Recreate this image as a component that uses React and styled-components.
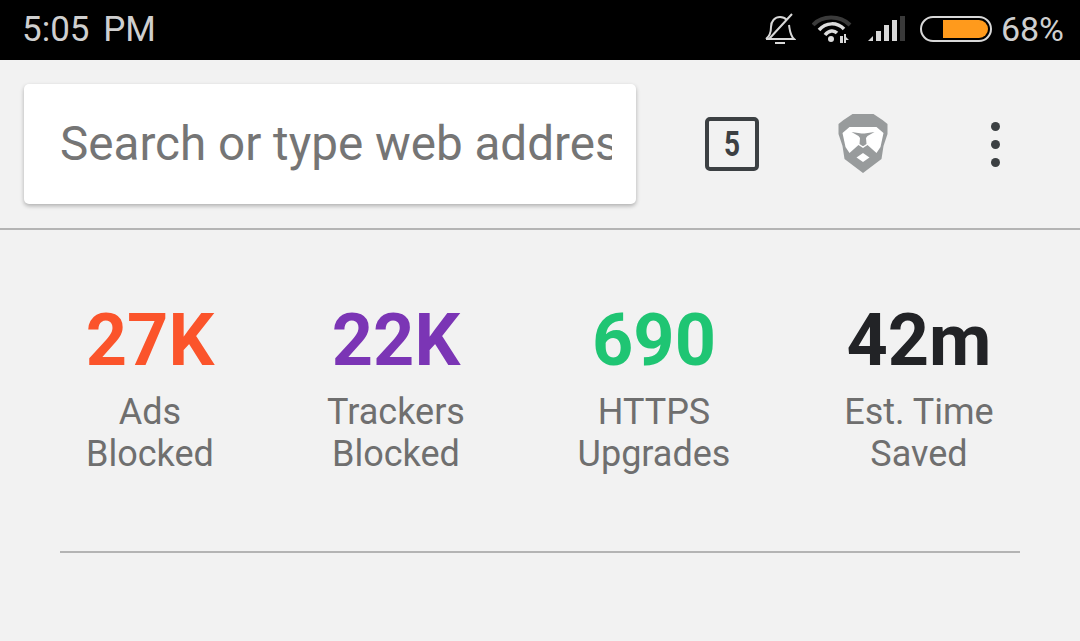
import React from "react";
import styled, { createGlobalStyle } from "styled-components";

const Global = createGlobalStyle`
  html, body { margin: 0; padding: 0; background: #f2f2f2; }
  body { font-family: Roboto, "Liberation Sans", sans-serif; }
`;
const Page = styled.div`
  width: 1080px; height: 641px; overflow: hidden; background: #f2f2f2;
  display: flex; flex-direction: column;
`;
const StatusBar = styled.div`
  height: 60px; background: #000; display: flex; align-items: center;
  justify-content: space-between; padding: 0 16px 3px 22px; box-sizing: border-box;
  color: #cfcfcf; flex: none;
`;
const Clock = styled.div`
  font-size: 35px; font-weight: 400; word-spacing: 5px; padding-top: 2px;
`;
const StatusIcons = styled.div`display: flex; align-items: center;`;
const Bell = styled.svg`width: 32px; height: 32px; margin-right: 16px; flex: none;`;
const Wifi = styled.svg`width: 40px; height: 28px; margin-right: 16px; flex: none;`;
const Signal = styled.svg`width: 37px; height: 25px; flex: none;`;
const Battery = styled.span`
  margin-left: 15px; width: 72px; height: 26px; box-sizing: border-box;
  border: 2px solid #d8d8d8; border-radius: 13px; padding: 2px 2px 2px 0; display: flex; justify-content: flex-end;
`;
const BatteryFill = styled.span`
  width: 45px; height: 100%; background: #ff9a1c; border-radius: 0 9px 9px 0;
`;
const Percent = styled.span`margin-left: 9px; font-size: 34px; font-weight: 400;`;
const Toolbar = styled.div`
  height: 170px; box-sizing: border-box; flex: none; display: flex; align-items: flex-start;
  padding: 24px 0 0 24px; border-bottom: 2px solid #b4b4b4;
`;
const SearchBox = styled.div`
  width: 612px; height: 120px; box-sizing: border-box; background: #fff; border-radius: 5px;
  box-shadow: 0 2px 4px rgba(0,0,0,.28); padding: 0 24px 0 36px; display: flex; align-items: center;
  font-size: 47.6px; color: #757575; flex: none;
`;
const SearchText = styled.div`overflow: hidden; white-space: nowrap; width: 100%;`;
const Actions = styled.div`
  flex: 1; height: 120px; display: flex; align-items: center; justify-content: flex-start;
`;
const TabCount = styled.div`
  width: 54px; height: 54px; margin-left: 69px; box-sizing: border-box; border: 4px solid #3c4043; border-radius: 5px;
  display: flex; align-items: center; justify-content: center; color: #3c4043; flex: none;
`;
const TabDigit = styled.span`
  display: inline-block; font-size: 35px; font-weight: 700; line-height: 1; transform: scaleX(0.8);
`;
const Lion = styled.svg`width: 52px; height: 60px; margin-left: 78px; flex: none;`;
const Dots = styled.div`
  margin-left: 102px; display: flex; flex-direction: column; gap: 9px;
`;
const Dot = styled.span`width: 9px; height: 9px; background: #3c4043; border-radius: 50%; display: block;`;
const Stats = styled.div`
  display: grid; grid-template-columns: 246px 246px 270px 260px; margin: 69px 0 0 27px; width: 1022px;
`;
const Stat = styled.div`
  display: flex; flex-direction: column; align-items: center; text-align: center;
`;
const Value = styled.div`
  font-size: 72px; font-weight: 700; line-height: 84px; color: ${p => p.$color};
`;
const Label = styled.div`
  font-size: 36px; line-height: 42px; color: #6f6f6f; margin-top: 8px;
`;
const Divider = styled.div`
  height: 2px; background: #b4b4b4; margin: 76px 60px 0;
`;

const stats = [
  { v: "27K", c: "#fb542b", l: ["Ads", "Blocked"] },
  { v: "22K", c: "#7b35b5", l: ["Trackers", "Blocked"] },
  { v: "690", c: "#1fc573", l: ["HTTPS", "Upgrades"] },
  { v: "42m", c: "#222326", l: ["Est. Time", "Saved"] },
];

export default function App() {
  return (
    <Page>
      <Global />
      <StatusBar>
        <Clock>5:05 PM</Clock>
        <StatusIcons>
          <Bell viewBox="0 0 32 32" fill="none" stroke="#d8d8d8" strokeWidth="2">
            <path d="M2 26c4-3 5-6 5-12c0-6 4-10 9-10c3 0 5 1 7 3M25 12c1 6 1 10 5 14H2" />
            <path d="M11 30h10M28 1L5 26" />
          </Bell>
          <Wifi viewBox="0 0 40 28">
            <path d="M1 10C10 0 28 0 38 10" stroke="#3a3a3a" strokeWidth="4" fill="none" />
            <path d="M7 15C14 7 25 7 32 14" stroke="#dcdcdc" strokeWidth="3.5" fill="none" />
            <path d="M13 20C17 15 22 15 25 18" stroke="#dcdcdc" strokeWidth="3.5" fill="none" />
            <circle cx="19" cy="24" r="3" fill="#dcdcdc" />
            <path d="M28 21h3v7h-3zM32 19h2v9h-2zM34 22l3 3h-3z" fill="#d8d8d8" />
          </Wifi>
          <Signal viewBox="0 0 37 25">
            <path d="M0 25L5 20V25Z" fill="#d8d8d8" />
            <rect x="8" y="15" width="5" height="10" fill="#d8d8d8" />
            <rect x="16" y="9" width="5" height="16" fill="#d8d8d8" />
            <rect x="24" y="4" width="5" height="21" fill="#d8d8d8" />
            <rect x="32" y="0" width="5" height="25" fill="#3a3a3a" />
          </Signal>
          <Battery><BatteryFill /></Battery>
          <Percent>68%</Percent>
        </StatusIcons>
      </StatusBar>
      <Toolbar>
        <SearchBox><SearchText>Search or type web address</SearchText></SearchBox>
        <Actions>
          <TabCount><TabDigit>5</TabDigit></TabCount>
          <Lion viewBox="0 0 51 60">
            <path d="M15 0H36L45 6L50 10V20L46 32L44 45L25.5 59L7 45L5 32L1 20V10L6 6Z" fill="#989b9c" />
            <path d="M12 13H39L46 19L43 33L39 39L30 31L25.5 34L21 31L12 39L8 33L5 19Z" fill="#fff" />
            <path d="M14 18L24 19.5H27L37 18L30 22L28.5 24L29 30L26 32H25L22 30L22.5 24L21 22Z" fill="#989b9c" />
            <path d="M25.5 39L32 43.5L25.5 48L19 43.5Z" fill="#fff" />
          </Lion>
          <Dots><Dot /><Dot /><Dot /></Dots>
        </Actions>
      </Toolbar>
      <Stats>
        {stats.map(s => (
          <Stat key={s.v}>
            <Value $color={s.c}>{s.v}</Value>
            <Label>{s.l[0]}<br />{s.l[1]}</Label>
          </Stat>
        ))}
      </Stats>
      <Divider />
    </Page>
  );
}
